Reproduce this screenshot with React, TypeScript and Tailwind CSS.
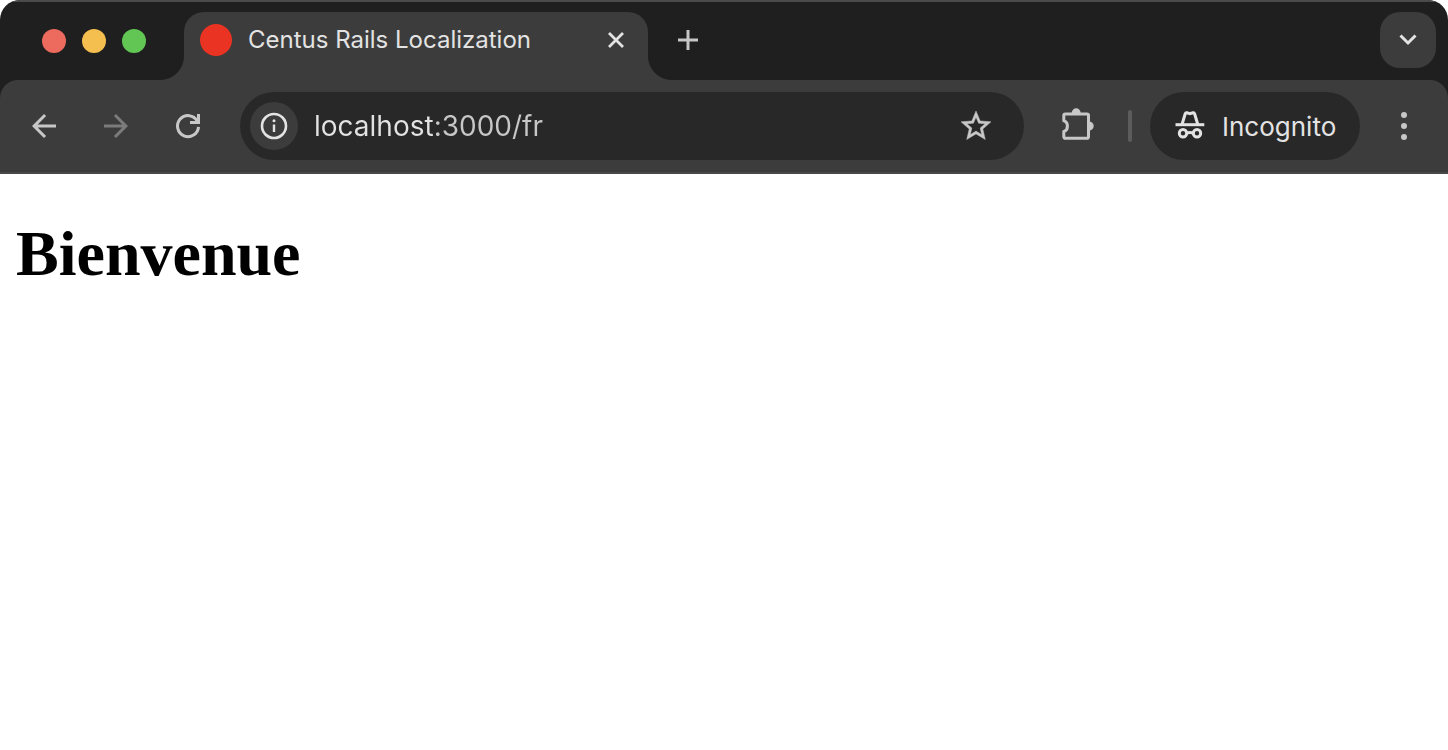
import { useState } from "react";

interface IconProps {
  className?: string;
}

const ArrowIcon: React.FC<IconProps> = ({ className }) => (
  <svg width="36" height="36" viewBox="0 0 24 24" fill="currentColor" className={className}>
    <path d="M20 11H7.83l5.59-5.59L12 4l-8 8 8 8 1.41-1.41L7.83 13H20v-2z" />
  </svg>
);

const ReloadIcon = () => (
  <svg width="36" height="36" viewBox="0 0 36 36" fill="none" stroke="currentColor" strokeWidth="3">
    <path d="M28.5 18.8A10.5 10.5 0 1 1 27.2 13" />
    <path d="M28.5 6v8.5H20" />
  </svg>
);

const InfoIcon = () => (
  <svg width="28" height="28" viewBox="0 0 28 28" fill="none" stroke="currentColor">
    <circle cx="14" cy="14" r="12" strokeWidth="2.6" />
    <path d="M14 12.5v7.5" strokeWidth="2.4" />
    <circle cx="14" cy="8.8" r="1.5" fill="currentColor" stroke="none" />
  </svg>
);

const StarIcon = () => (
  <svg width="36" height="36" viewBox="0 0 24 24" fill="currentColor" stroke="currentColor" strokeWidth=".3">
    <path d="M22 9.24l-7.19-.62L12 2 9.19 8.63 2 9.24l5.46 4.73L5.82 21 12 17.27 18.18 21l-1.63-7.03L22 9.24zM12 15.4l-3.76 2.27 1-4.28-3.32-2.88 4.38-.38L12 6.1l1.71 4.04 4.38.38-3.32 2.88 1 4.28L12 15.4z" />
  </svg>
);

const ExtensionsIcon = () => (
  <svg width="36" height="36" viewBox="0 0 36 36" fill="none" stroke="currentColor" strokeWidth="3" strokeLinejoin="round">
    <path d="M3.8 12.8V7.5A1.5 1.5 0 0 1 5.3 6H27a1.5 1.5 0 0 1 1.5 1.5v21.300a1.5 1.5 0 0 1-1.5 1.5H5.3a1.5 1.5 0 0 1-1.5-1.5v-5.300c2.100-.6 3.600-2.800 3.600-5.300s-1.500-4.800-3.600-5.400z" />
    <path d="M11.7 5a4.500 4.700 0 0 1 9 0zM29 13.500a4.700 4.500 0 0 1 0 9z" fill="currentColor" stroke="none" />
  </svg>
);

const IncognitoIcon = () => (
  <svg width="30" height="30" viewBox="0 0 30 30" fill="none" stroke="currentColor" strokeWidth="3">
    <path d="M.5 13.700h28.800" />
    <path d="M7 13.500l3.200-10.800c.3-.8.9-1.100 1.700-.9l3 .9 3-.9c.8-.2 1.400.1 1.700.9l3.200 10.800" />
    <circle cx="8" cy="22.300" r="3.700" />
    <circle cx="22" cy="22.300" r="3.700" />
    <path d="M11.500 22.200q3.500-1.200 7 0" />
  </svg>
);

const WINDOW_LIGHTS = [
  { label: "Close window", color: "bg-[#ed6a5f]" },
  { label: "Minimize window", color: "bg-[#f5bf4f]" },
  { label: "Zoom window", color: "bg-[#62c655]" },
];

const TabStrip = () => (
  <div className="flex h-20 items-end border-t-2 border-[#4b4b4b] bg-[#1f1f1f] pr-3">
    <div className="flex h-17 w-46 shrink-0 items-center gap-4 pb-2.5 pl-10.5">
      {WINDOW_LIGHTS.map((light) => (
        <button key={light.label} aria-label={light.label} className={`size-6 rounded-full ${light.color}`} />
      ))}
    </div>

    {/* Active tab, flared into the toolbar on both sides */}
    <div className="relative flex h-17 w-116 items-center gap-4 rounded-t-[20px] bg-[#3c3c3c] px-4 pb-3 before:absolute before:right-full before:bottom-0 before:size-6 before:bg-[radial-gradient(circle_at_0_0,transparent_23.5px,#3c3c3c_24.5px)] after:absolute after:bottom-0 after:left-full after:size-6 after:bg-[radial-gradient(circle_at_100%_0,transparent_23.5px,#3c3c3c_24.5px)]">
      <span className="size-8 shrink-0 rounded-full bg-[#ea3323]" />
      <span className="flex-1 truncate text-2xl text-[#e3e3e3]">Centus Rails Localization</span>
      <button aria-label="Close tab" className="flex size-8 items-center justify-center text-[#e3e3e3]">
        <svg width="16" height="16" viewBox="0 0 16 16" stroke="currentColor" strokeWidth="2.8">
          <path d="M1 1l14 14M15 1L1 15" />
        </svg>
      </button>
    </div>

    <button aria-label="New tab" className="mb-3 ml-3 flex size-14 items-center justify-center text-[#c7c7c7]">
      <svg width="20" height="20" viewBox="0 0 20 20" stroke="currentColor" strokeWidth="3">
        <path d="M10 0v20M0 10h20" />
      </svg>
    </button>

    <button
      aria-label="Search tabs"
      className="mb-3 ml-auto flex size-14 items-center justify-center rounded-[20px] bg-[#3c3c3c] text-[#e3e3e3]"
    >
      <svg width="18" height="12" viewBox="0 0 18 12" fill="none" stroke="currentColor" strokeWidth="3">
        <path d="M1.5 1.5L9 9l7.5-7.5" />
      </svg>
    </button>
  </div>
);

const Toolbar = () => {
  const [url, setUrl] = useState("localhost:3000/fr");

  return (
    <div className="bg-[#1f1f1f]">
      <div className="flex items-center rounded-t-[18px] border-b-2 border-[#484848] bg-[#3c3c3c] py-3 pr-6 pl-2 text-[#c7c7c7]">
        <button aria-label="Back" className="flex h-17 w-18 shrink-0 items-center justify-center">
          <ArrowIcon />
        </button>
        <button aria-label="Forward" disabled className="flex h-17 w-18 shrink-0 items-center justify-center text-[#7b7b7b]">
          <ArrowIcon className="rotate-180" />
        </button>
        <button aria-label="Reload" className="flex h-17 w-18 shrink-0 items-center justify-center">
          <ReloadIcon />
        </button>

        {/* Address bar */}
        <div className="ml-4 flex h-17 flex-1 items-center rounded-full bg-[#282828] pr-7.5 pl-2.5">
          <button
            aria-label="View site information"
            className="flex size-12 shrink-0 items-center justify-center rounded-full bg-[#3c3c3c] text-[#e3e3e3]"
          >
            <InfoIcon />
          </button>
          {/* The host is drawn brighter than the rest of the address */}
          <input
            type="text"
            aria-label="Address"
            value={url}
            onChange={(e) => setUrl(e.target.value)}
            className="ml-4 min-w-0 flex-1 bg-[linear-gradient(to_right,#e3e3e3_120px,#c7c7c7_120px)] bg-clip-text text-[28px] text-transparent caret-white outline-none"
          />
          <button aria-label="Bookmark this tab">
            <StarIcon />
          </button>
        </div>

        <button aria-label="Extensions" className="ml-9 shrink-0">
          <ExtensionsIcon />
        </button>
        <span className="ml-8 h-8 w-1 shrink-0 rounded-full bg-[#5c5c5c]" />
        <button className="ml-4.5 flex h-17 w-52.5 shrink-0 items-center gap-[17px] rounded-full bg-[#282828] pl-[25px] text-[26px] text-[#e3e3e3]">
          <IncognitoIcon />
          Incognito
        </button>
        <button aria-label="Menu" className="ml-6 flex size-10 shrink-0 items-center justify-center">
          <svg width="6" height="28" viewBox="0 0 6 28" fill="currentColor">
            <circle cx="3" cy="3" r="3" />
            <circle cx="3" cy="14" r="3" />
            <circle cx="3" cy="25" r="3" />
          </svg>
        </button>
      </div>
    </div>
  );
};

export default function App() {
  return (
    <div className="min-h-screen bg-white font-['Inter',sans-serif]">
      <header className="overflow-hidden rounded-t-[20px]">
        <TabStrip />
        <Toolbar />
      </header>
      <main className="px-4 py-11">
        <h1 className="font-['Liberation_Serif',serif] text-[64px] leading-[72px] font-bold text-black">Bienvenue</h1>
      </main>
    </div>
  );
}
